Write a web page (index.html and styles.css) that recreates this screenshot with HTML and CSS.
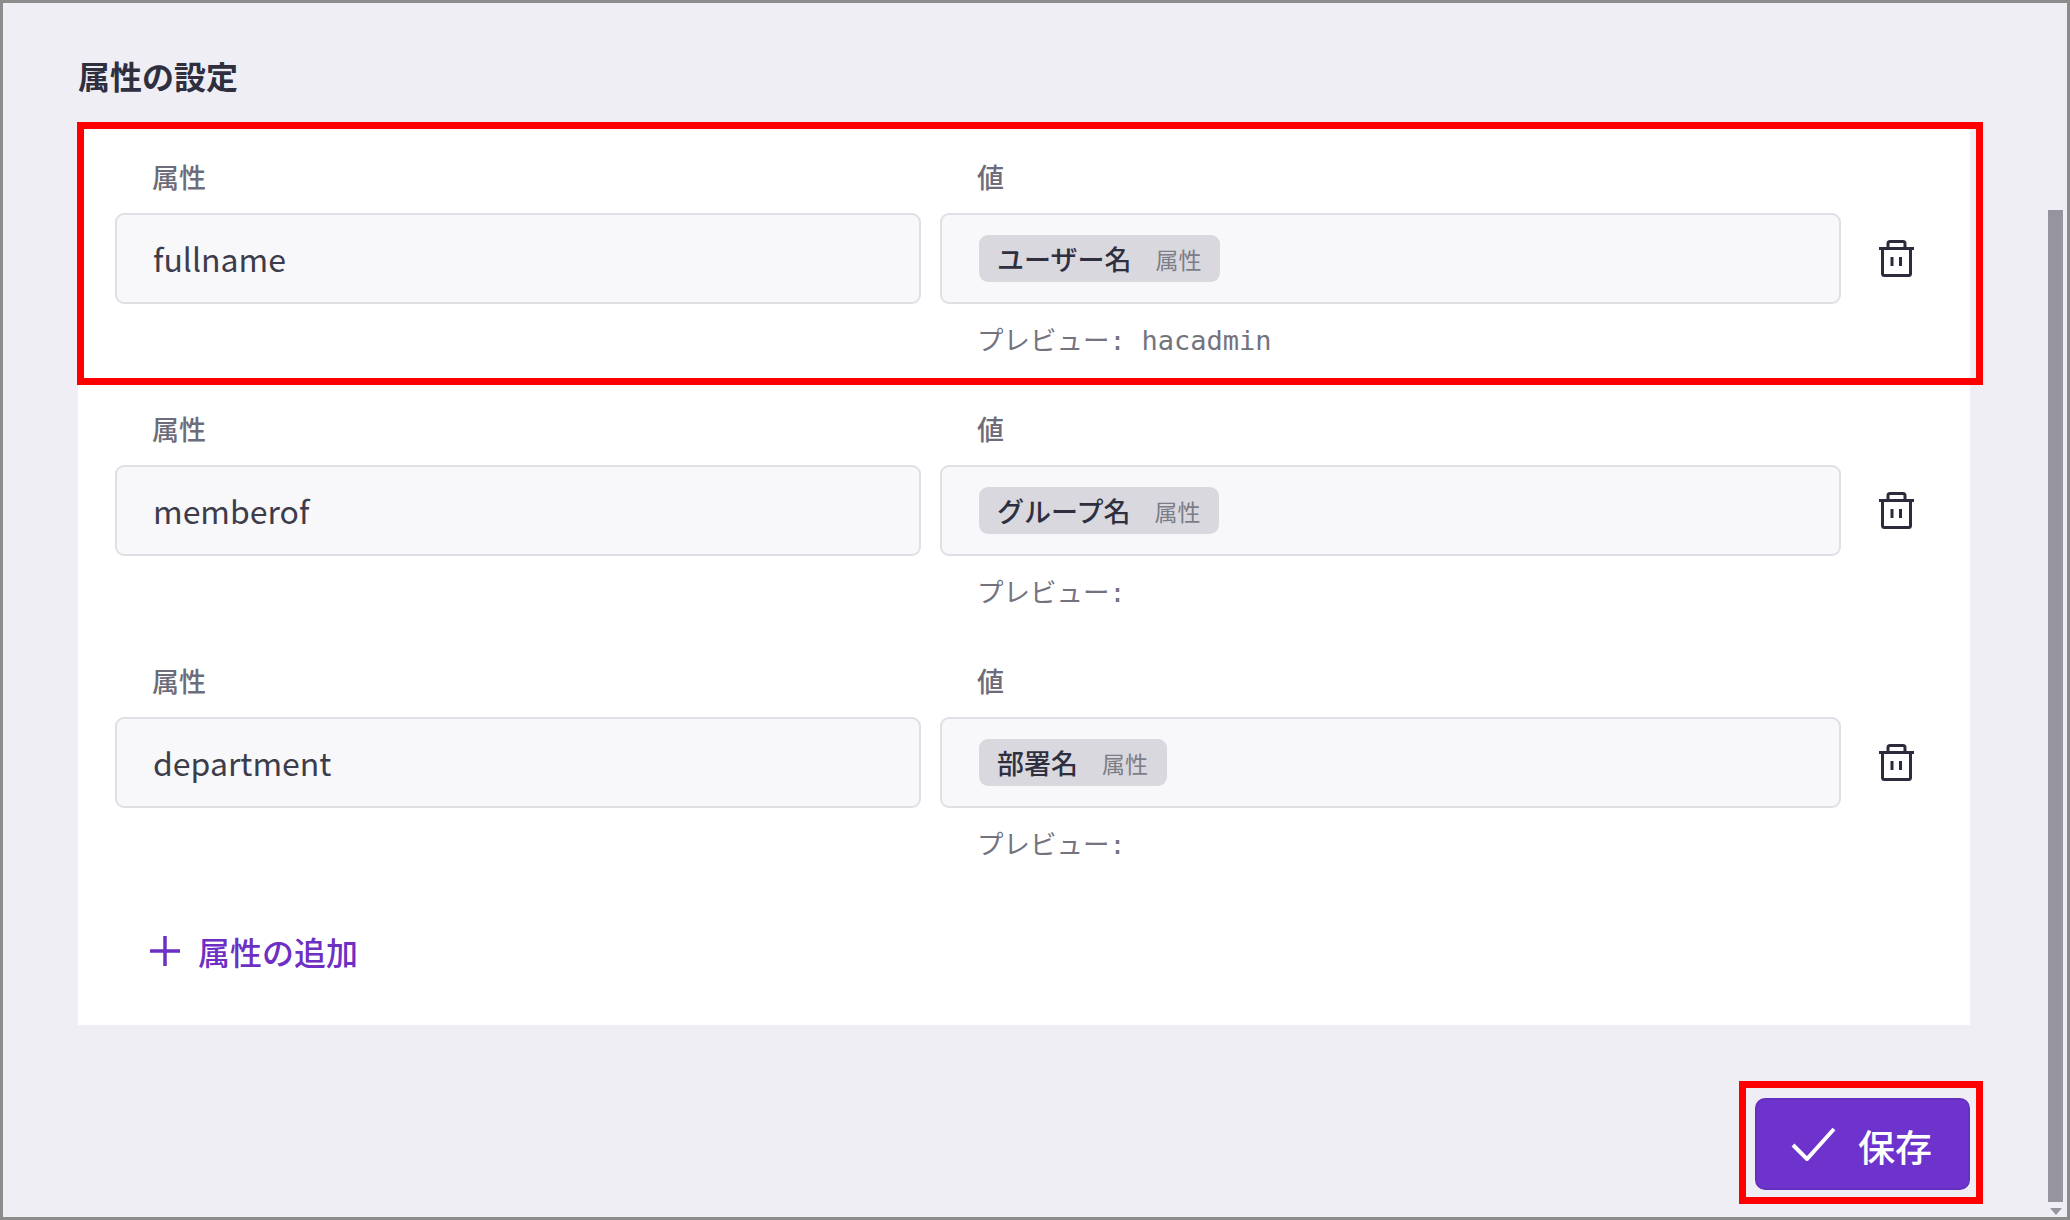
FILE: index.html
```html
<!DOCTYPE html>
<html lang="ja">
<head>
<meta charset="utf-8">
<title>属性の設定</title>
<link rel="stylesheet" href="styles.css">
</head>
<body>
<div class="window">
  <h2 class="title">属性の設定</h2>
  <section class="panel">
    <div class="row">
      <label class="label">属性</label>
      <label class="label">値</label>
      <span></span>
      <div class="input">fullname</div>
      <div class="input value"><span class="chip">ユーザー名<small class="chip-kind">属性</small></span></div>
      <button class="trash" aria-label="削除"><svg class="trash-icon" viewBox="0 0 37 37"><path d="M10 8V3.500a2 2 0 0 1 2-2h13a2 2 0 0 1 2 2V8M1 8.500h35M4.500 8.500V33.500a2 2 0 0 0 2 2h24a2 2 0 0 0 2-2V8.500M14 17v9M22.500 17v9"/></svg></button>
      <span></span>
      <div class="preview">プレビュー: <span class="mono">hacadmin</span></div>
    </div>
    <div class="row">
      <label class="label">属性</label>
      <label class="label">値</label>
      <span></span>
      <div class="input">memberof</div>
      <div class="input value"><span class="chip">グループ名<small class="chip-kind">属性</small></span></div>
      <button class="trash" aria-label="削除"><svg class="trash-icon" viewBox="0 0 37 37"><path d="M10 8V3.500a2 2 0 0 1 2-2h13a2 2 0 0 1 2 2V8M1 8.500h35M4.500 8.500V33.500a2 2 0 0 0 2 2h24a2 2 0 0 0 2-2V8.500M14 17v9M22.500 17v9"/></svg></button>
      <span></span>
      <div class="preview">プレビュー:</div>
    </div>
    <div class="row">
      <label class="label">属性</label>
      <label class="label">値</label>
      <span></span>
      <div class="input">department</div>
      <div class="input value"><span class="chip">部署名<small class="chip-kind">属性</small></span></div>
      <button class="trash" aria-label="削除"><svg class="trash-icon" viewBox="0 0 37 37"><path d="M10 8V3.500a2 2 0 0 1 2-2h13a2 2 0 0 1 2 2V8M1 8.500h35M4.500 8.500V33.500a2 2 0 0 0 2 2h24a2 2 0 0 0 2-2V8.500M14 17v9M22.500 17v9"/></svg></button>
      <span></span>
      <div class="preview">プレビュー:</div>
    </div>
    <button class="add"><svg class="add-icon" viewBox="0 0 30 30"><path d="M15 0v30M0 15h30"/></svg>属性の追加</button>
  </section>
  <div class="actions">
    <button class="save"><svg class="save-icon" viewBox="0 0 45 34"><path d="M2 18l14 14L43 2"/></svg><span class="save-label">保存</span></button>
  </div>
  <div class="scrollbar"></div>
  <div class="scroll-arrow"></div>
  <div class="mark mark-row"></div>
  <div class="mark mark-save"></div>
</div>
</body>
</html>
```

FILE: styles.css
```css
* { box-sizing: border-box; }
html, body { margin: 0; padding: 0; }
body {
  width: 2070px;
  height: 1220px;
  overflow: hidden;
  font-family: "Noto Sans CJK JP", "Noto Sans", sans-serif;
  color: #2f2f3f;
}
.window {
  position: relative;
  width: 2070px;
  height: 1220px;
  padding: 0 97px 0 75px;
  background: #eeeef4;
  border: 3px solid #8c8c8c;
}
.title {
  margin: 0;
  height: 119px;
  padding-top: 53px;
  font-size: 32px;
  line-height: 38px;
  font-weight: 700;
  color: #2f2f3f;
}
.panel {
  width: 1892px;
  padding: 37px 0 56px 37px;
  background: #fff;
}
.row {
  display: grid;
  grid-template-columns: 806px 901px 73px;
  grid-template-rows: 36px 91px 36px;
  column-gap: 19px;
  margin-bottom: 53px;
  row-gap: 18px;
}
.label {
  padding-left: 37px;
  font-size: 27px;
  line-height: 36px;
  font-weight: 500;
  color: #6c6c7a;
}
.input {
  display: flex;
  align-items: center;
  padding: 0 0 2px 36px;
  background: #f8f8fb;
  border: 2px solid #dfdfe5;
  border-radius: 9px;
  font-size: 32px;
  color: #3c3c4a;
}
.value { padding: 0 0 0 37px; }
.chip {
  display: inline-flex;
  align-items: center;
  height: 47px;
  padding: 0 19px 0 18px;
  background: #d9d8de;
  border-radius: 9px;
  font-size: 27px;
  font-weight: 500;
  color: #2f2f3f;
}
.chip-kind {
  margin-left: 24px;
  font-size: 23px;
  font-weight: 400;
  color: #7d7d88;
}
.trash {
  display: flex;
  align-items: center;
  justify-content: center;
  padding: 0;
  border: 0;
  background: none;
}
.trash-icon {
  width: 37px;
  height: 37px;
  fill: none;
  stroke: #2b2b3b;
  stroke-width: 3;
}
.preview {
  padding: 1px 0 0 37px;
  font-family: "DejaVu Sans Mono", "Noto Sans CJK JP", monospace;
  font-size: 26.500px;
  line-height: 36px;
  color: #73737e;
  white-space: nowrap;
}
.mono { font-size: 27px; }
.add {
  display: flex;
  align-items: center;
  height: 36px;
  margin: 71px 0 0;
  padding: 0 0 0 35px;
  border: 0;
  background: none;
  font-family: inherit;
  font-size: 32px;
  font-weight: 500;
  color: #6d2fc4;
}
.add-icon {
  width: 30px;
  height: 30px;
  margin-right: 18px;
  fill: none;
  stroke: #6d2fc4;
  stroke-width: 3.500;
}
.actions {
  display: flex;
  justify-content: flex-end;
  width: 1892px;
  margin-top: 73px;
}
.save {
  display: flex;
  align-items: center;
  width: 215px;
  height: 92px;
  padding: 0 0 0 34px;
  background: #6d33cc;
  border: 2px solid #6530c0;
  border-radius: 10px;
  font-family: inherit;
  font-size: 37px;
  font-weight: 500;
  color: #fff;
}
.save-label { padding-top: 4px; }
.save-icon {
  width: 45px;
  height: 34px;
  margin-right: 22px;
  fill: none;
  stroke: #fff;
  stroke-width: 4;
}
.scrollbar {
  position: absolute;
  left: 2045px;
  top: 207px;
  width: 15px;
  height: 992px;
  background: #96959f;
}
.scroll-arrow {
  position: absolute;
  left: 2047px;
  top: 1205px;
  border-left: 6px solid transparent;
  border-right: 6px solid transparent;
  border-top: 7px solid #96959f;
}
.mark {
  position: absolute;
  border: 7px solid #ff0000;
}
.mark-row {
  left: 74px;
  top: 119px;
  width: 1906px;
  height: 263px;
}
.mark-save {
  left: 1736px;
  top: 1078px;
  width: 244px;
  height: 123px;
}
```
